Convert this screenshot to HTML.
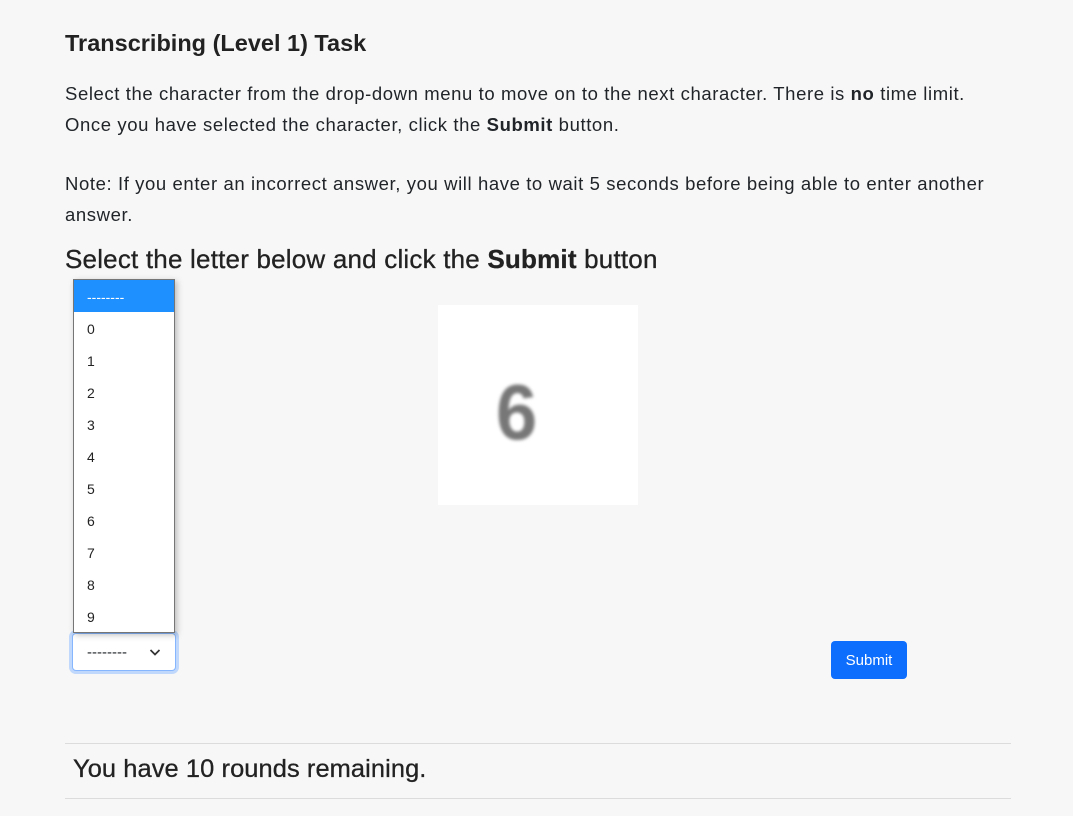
<!DOCTYPE html>
<html><head><meta charset="utf-8"><style>
body{margin:0;background:#f7f7f7;font-family:"Liberation Sans",sans-serif;color:#212529;width:1073px;height:816px;overflow:hidden;position:relative}
.a{position:absolute;white-space:nowrap}
h4{position:absolute;left:65px;top:30px;margin:0;font-size:23.5px;font-weight:bold;color:#222}
p{position:absolute;left:65px;margin:0;font-size:18.5px;line-height:31px;letter-spacing:0.6px;width:1000px;white-space:nowrap}
.h2{position:absolute;left:65px;top:244px;font-size:26px;letter-spacing:0.2px;color:#222;-webkit-text-stroke:0.3px #222}
.list{position:absolute;left:73px;top:279px;width:100px;height:352px;background:#fff;border:1px solid #767676;box-shadow:2px 2px 6px rgba(0,0,0,.25)}
.list div{height:32px;line-height:34px;padding-left:13px;font-size:14px;color:#222}
.list div.sel{background:#1e90ff;color:#fff}
.selbox{position:absolute;left:72px;top:633px;width:104px;height:38px;background:#fff;border:1px solid #86b7fe;border-radius:4px;box-shadow:0 0 0 3px #c0d8fb;font-size:15px;line-height:38px;padding-left:14px;box-sizing:border-box}
.btn{position:absolute;left:831px;top:641px;width:76px;height:38px;background:#0d6efd;border-radius:4px;color:#fff;font-size:15px;line-height:40px;text-align:center}
.img{position:absolute;left:438px;top:305px;width:200px;height:200px;background:#fff}
.six{position:absolute;left:58px;top:64px;font-size:78px;line-height:86px;font-weight:bold;color:#777;filter:blur(1.6px);transform:scaleX(0.95);transform-origin:left}
.hr{position:absolute;left:65px;width:946px;height:1px;background:#dcdcdc}
</style></head><body>
<h4>Transcribing (Level 1) Task</h4>
<p style="top:78px">Select the character from the drop-down menu to move on to the next character. There is <b>no</b> time limit.<br>Once you have selected the character, click the <b>Submit</b> button.</p>
<p style="top:168px">Note: If you enter an incorrect answer, you will have to wait 5 seconds before being able to enter another<br>answer.</p>
<div class="h2">Select the letter below and click the <b>Submit</b> button</div>
<div class="img"><div class="six">6</div></div>
<div class="selbox">--------<svg style="position:absolute;left:76px;top:14px" width="12" height="9" viewBox="0 0 12 9"><path d="M1.5 2l4.5 4.5L10.5 2" fill="none" stroke="#333" stroke-width="1.7"/></svg></div>
<div class="list"><div class="sel">--------</div><div>0</div><div>1</div><div>2</div><div>3</div><div>4</div><div>5</div><div>6</div><div>7</div><div>8</div><div>9</div></div>
<div class="btn">Submit</div>
<div class="hr" style="top:743px"></div>
<div class="a" style="left:73px;top:755px;font-size:25.4px;letter-spacing:0.1px;color:#222;-webkit-text-stroke:0.3px #222">You have 10 rounds remaining.</div>
<div class="hr" style="top:798px"></div>
</body></html>
